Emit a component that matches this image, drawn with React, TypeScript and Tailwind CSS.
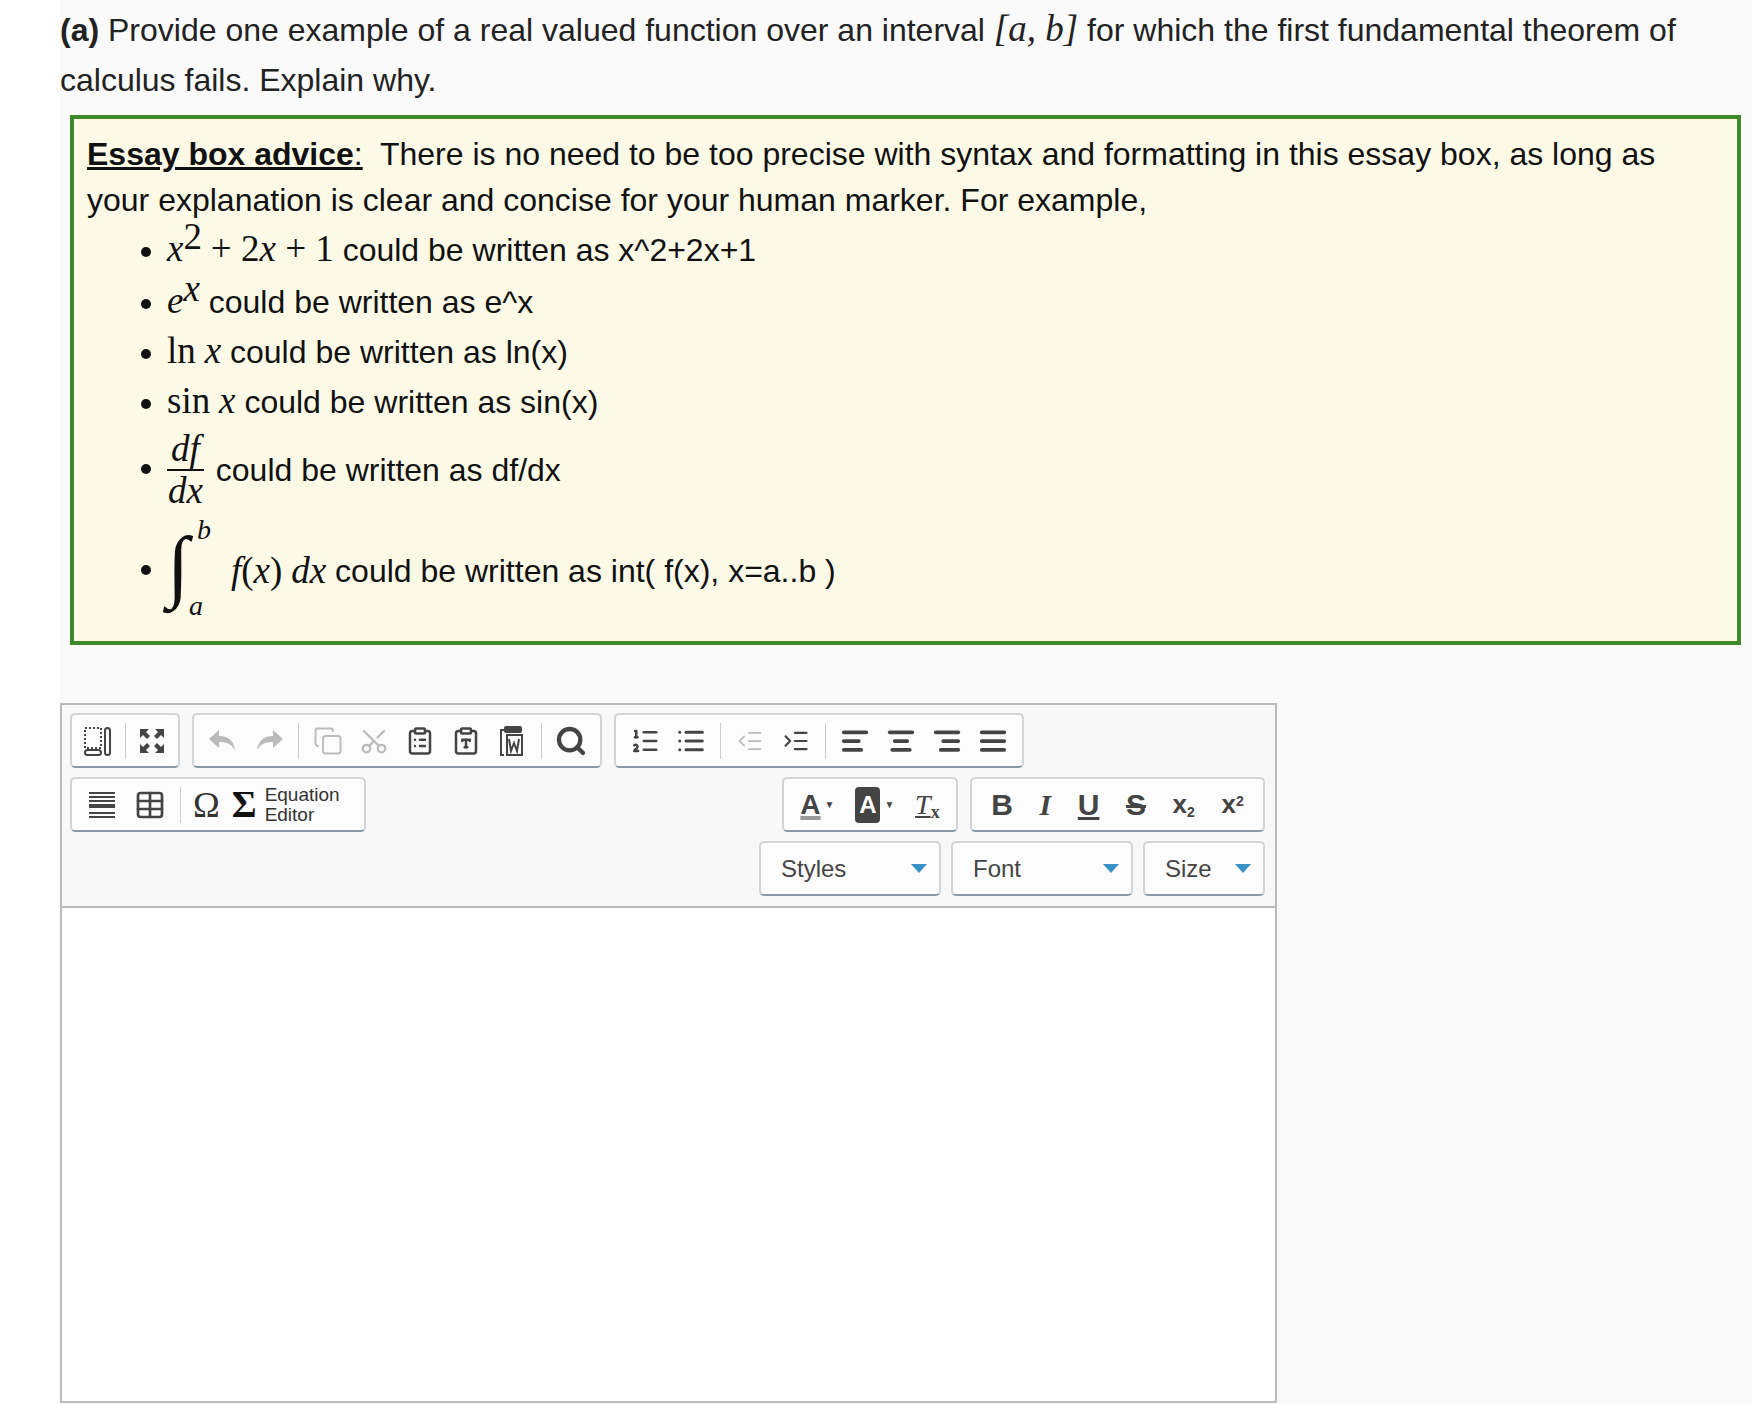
import React from "react";
import { Scissors, Search, ListOrdered, List, IndentDecrease, IndentIncrease, AlignLeft, AlignCenter, AlignRight, AlignJustify, Table, Copy, ClipboardList, ClipboardType } from "lucide-react";

const M = ({ children, i = true }: { children: React.ReactNode; i?: boolean }) => (
  <span className={"text-[37px] leading-[40px] " + (i ? "italic" : "")} style={{ fontFamily: '"Liberation Serif", "DejaVu Serif", serif' }}>{children}</span>
);

const Group = ({ children, className = "" }: { children: React.ReactNode; className?: string }) => (
  <div className={"flex items-center h-[55px] px-2 gap-1 border-2 border-[#d1d5d8] border-b-[#8a9aa6] rounded-[5px] bg-[#fcfcfc] " + className}>{children}</div>
);
const Sep = () => <div className="w-px h-[36px] bg-[#ccc] mx-1" />;
const B = ({ children, dim = false }: { children: React.ReactNode; dim?: boolean }) => (
  <div className={"w-[44px] h-[44px] flex items-center justify-center " + (dim ? "text-[#bbb]" : "text-[#444]")}>{children}</div>
);
const Drop = ({ label, w }: { label: string; w: string }) => (
  <div className={"flex items-center justify-between h-[55px] pl-5 pr-3 border-2 border-[#d1d5d8] border-b-[#8a9aa6] rounded-[5px] bg-[#fcfcfc] text-[24px] text-[#444] " + w}>
    <span>{label}</span>
    <span className="w-0 h-0 border-l-[8px] border-r-[8px] border-t-[9px] border-l-transparent border-r-transparent border-t-[#3a93c8]" />
  </div>
);

export default function App() {
  return (
    <div className="w-[1752px] h-[1404px] bg-white overflow-hidden" style={{ fontFamily: '"Liberation Sans", Arial, sans-serif' }}>
      <div className="ml-[60px] bg-[#fafafa] h-full">
        <div className="text-[32px] leading-[50px] text-[#222] pt-[5px] w-[1690px]">
          <b>(a)</b> Provide one example of a real valued function over an interval <M>[a, b]</M> for which the first fundamental theorem of calculus fails. Explain why.
        </div>
        <div className="ml-[10px] mt-[10px] w-[1671px] border-[4px] border-[#3e8a2b] bg-[#fcfae6] px-[13px] pt-[12px] pb-[10px] text-[32px] text-[#111] leading-[46px]">
          <div><b className="underline">Essay box advice</b><span className="underline">:</span>&nbsp; There is no need to be too precise with syntax and formatting in this essay box, as long as your explanation is clear and concise for your human marker. For example,</div>
          <ul className="list-disc pl-[80px] mt-[4px]">
            <li className="h-[52px]"><M>x</M><sup className="text-[24px]"><M i={false}>2</M></sup> <M i={false}>+ 2</M><M>x</M><M i={false}> + 1</M> could be written as x^2+2x+1</li>
            <li className="h-[50px]"><M>e</M><sup className="text-[24px]"><M>x</M></sup> could be written as e^x</li>
            <li className="h-[50px]"><M i={false}>ln</M> <M>x</M> could be written as ln(x)</li>
            <li className="h-[50px]"><M i={false}>sin</M> <M>x</M> could be written as sin(x)</li>
            <li className="h-[92px]">
              <span className="inline-flex items-center align-middle">
                <span className="inline-flex flex-col items-center leading-[36px] mr-3">
                  <span className="border-b-2 border-[#111] px-1"><M>df</M></span>
                  <M>dx</M>
                </span>
                could be written as df/dx
              </span>
            </li>
            <li className="h-[110px]">
              <span className="inline-flex items-center align-middle">
                <span className="relative inline-block w-[56px] h-[100px] mr-2">
                  <span className="absolute left-0 top-[4px] text-[80px] leading-[80px] italic" style={{ fontFamily: '"Liberation Serif", serif' }}>∫</span>
                  <span className="absolute left-[30px] top-[-6px] text-[28px] leading-[30px] italic" style={{ fontFamily: '"Liberation Serif", serif' }}>b</span>
                  <span className="absolute left-[22px] top-[70px] text-[28px] leading-[30px] italic" style={{ fontFamily: '"Liberation Serif", serif' }}>a</span>
                </span>
                <M>f</M><M i={false}>(</M><M>x</M><M i={false}>)</M>&nbsp;<M>dx</M>&nbsp;could be written as int( f(x), x=a..b )
              </span>
            </li>
          </ul>
        </div>
        <div className="mt-[58px] w-[1217px] h-[700px] border-2 border-[#bbb] bg-white">
          <div className="bg-[#f8f8f8] border-b-2 border-[#bbb] h-[203px] px-[8px] pt-[8px] flex flex-col gap-[9px]">
            <div className="flex gap-[12px]">
              <Group className="w-[110px] justify-between">
                <B><svg width="30" height="30" viewBox="0 0 30 30" fill="none" stroke="#444" strokeWidth="2"><rect x="2" y="2" width="16" height="20" strokeDasharray="2 2"/><rect x="2" y="24" width="16" height="5" rx="2.5"/><rect x="22" y="2" width="5" height="27" rx="2.5"/></svg></B>
                <Sep />
                <B><svg width="28" height="28" viewBox="0 0 28 28" fill="#444"><path d="M2 2h9l-3 3 4 4-3 3-4-4-3 3zM26 2v9l-3-3-4 4-3-3 4-4-3-3zM2 26v-9l3 3 4-4 3 3-4 4 3 3zM26 26h-9l3-3-4-4 3-3 4 4 3-3z"/></svg></B>
              </Group>
              <Group className="w-[410px]">
                <B dim><svg width="28" height="22" viewBox="0 0 28 22" fill="#bbb"><path d="M10 0L0 9l10 9v-6c8 0 12 2 16 8-1-8-6-14-16-14z"/></svg></B>
                <B dim><svg width="28" height="22" viewBox="0 0 28 22" fill="#bbb"><path d="M18 0l10 9-10 9v-6c-8 0-12 2-16 8 1-8 6-14 16-14z"/></svg></B>
                <Sep />
                <B dim><Copy size={30} strokeWidth={1.5} /></B>
                <B dim><Scissors size={30} strokeWidth={1.8} className="-rotate-90" /></B>
                <B><ClipboardList size={30} strokeWidth={2} /></B>
                <B><ClipboardType size={30} strokeWidth={2} /></B>
                <B><svg width="28" height="32" viewBox="0 0 28 32" fill="none" stroke="#444" strokeWidth="2"><path d="M6 5H3v25h3"/><rect x="7" y="2" width="16" height="5" rx="1" fill="#444"/><rect x="9" y="10" width="15" height="20"/><path d="M11 14l2 12 3-8 3 8 2-12"/></svg></B>
                <Sep />
                <B><Search size={32} strokeWidth={3.2} /></B>
              </Group>
              <Group className="w-[410px]">
                <B><ListOrdered size={30} strokeWidth={2} /></B>
                <B><List size={30} strokeWidth={2.4} /></B>
                <Sep />
                <B dim><IndentDecrease size={28} strokeWidth={1.5} /></B>
                <B><IndentIncrease size={28} strokeWidth={1.8} /></B>
                <Sep />
                <B><AlignLeft size={30} strokeWidth={3} /></B>
                <B><AlignCenter size={30} strokeWidth={3} /></B>
                <B><AlignRight size={30} strokeWidth={3} /></B>
                <B><AlignJustify size={30} strokeWidth={3} /></B>
              </Group>
            </div>
            <div className="flex justify-between">
              <Group className="w-[296px]">
                <B><svg width="30" height="30" viewBox="0 0 30 30" stroke="#444" strokeWidth="2"><path d="M2 3h26M2 7h26M2 11h26M2 23h26M2 27h26"/><path d="M2 16h26" strokeWidth="4"/></svg></B>
                <B><Table size={32} strokeWidth={2} /></B>
                <Sep />
                <span className="text-[36px] text-[#333] mx-1" style={{ fontFamily: '"Liberation Serif", serif' }}>Ω</span>
                <span className="text-[38px] font-bold text-[#111] ml-1" style={{ fontFamily: '"Liberation Serif", serif' }}>Σ</span>
                <span className="text-[19px] leading-[20px] text-[#333] ml-1">Equation<br />Editor</span>
              </Group>
              <div className="flex gap-[12px] mr-[2px] self-start">
                <Group className="w-[176px] justify-around">
                  <div className="flex items-center text-[#444]"><span className="text-[28px] font-bold underline decoration-[#999] decoration-4">A</span><span className="text-[10px] ml-1">▼</span></div>
                  <div className="flex items-center"><span className="bg-[#444] text-white text-[24px] font-bold px-1 rounded">A</span><span className="text-[10px] ml-1 text-[#444]">▼</span></div>
                  <span className="text-[28px] italic underline text-[#444]" style={{ fontFamily: '"Liberation Serif", serif' }}>T<sub className="not-italic text-[18px] font-bold">x</sub></span>
                </Group>
                <Group className="w-[295px] justify-around text-[#444] text-[30px] font-bold">
                  <span>B</span>
                  <span className="italic" style={{ fontFamily: '"Liberation Serif", serif' }}>I</span>
                  <span className="underline">U</span>
                  <span className="line-through">S</span>
                  <span className="text-[26px]">x<sub className="text-[14px]">2</sub></span>
                  <span className="text-[26px]">x<sup className="text-[14px]">2</sup></span>
                </Group>
              </div>
            </div>
            <div className="flex justify-end gap-[10px] mr-[2px]">
              <Drop label="Styles" w="w-[182px]" />
              <Drop label="Font" w="w-[182px]" />
              <Drop label="Size" w="w-[122px]" />
            </div>
          </div>
        </div>
      </div>
    </div>
  );
}
